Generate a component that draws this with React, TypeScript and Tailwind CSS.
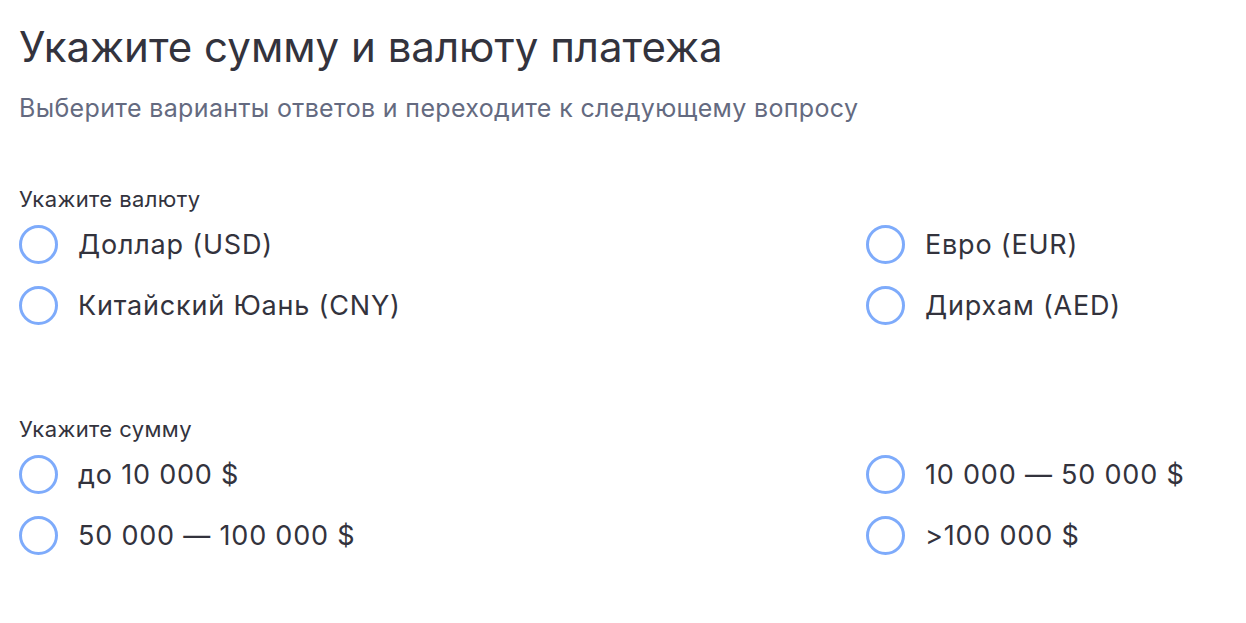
import React from 'react';

interface IOption {
	label: string;
}

const Radio: React.FC<IOption> = ({ label }) => {
	return (
		<label className="flex items-center h-[61px] cursor-pointer select-none">
			<span className="w-[39px] h-[39px] rounded-full border-[3px] border-[#7eabfb] shrink-0"></span>
			<span className="ml-[20px] text-[27px] tracking-[0.8px] text-[#33333d] leading-none">
				{label}
			</span>
		</label>
	);
};

interface IGroup {
	title: string;
	options: string[];
}

const Group: React.FC<IGroup> = ({ title, options }) => {
	return (
		<div>
			<p className="text-[22px] tracking-[0.4px] text-[#33333d] leading-none mb-[4px]">{title}</p>
			<div className="grid grid-cols-[847px_1fr]">
				{options.map((o) => (
					<Radio key={o} label={o} />
				))}
			</div>
		</div>
	);
};

const App: React.FC = () => {
	return (
		<div className="min-h-screen bg-white px-[19px] pt-[26px] font-['Inter',sans-serif]">
			<h1 className="text-[42px] leading-none text-[#33333d]">
				Укажите сумму и валюту платежа
			</h1>
			<p className="mt-[28px] text-[25px] tracking-[0.35px] leading-none text-[#646a80]">
				Выберите варианты ответов и переходите к следующему вопросу
			</p>
			<div className="mt-[67px]">
				<Group
					title="Укажите валюту"
					options={['Доллар (USD)', 'Евро (EUR)', 'Китайский Юань (CNY)', 'Дирхам (AED)']}
				/>
			</div>
			<div className="mt-[82px]">
				<Group
					title="Укажите сумму"
					options={['до 10 000 $', '10 000 — 50 000 $', '50 000 — 100 000 $', '>100 000 $']}
				/>
			</div>
		</div>
	);
};

export default App;
